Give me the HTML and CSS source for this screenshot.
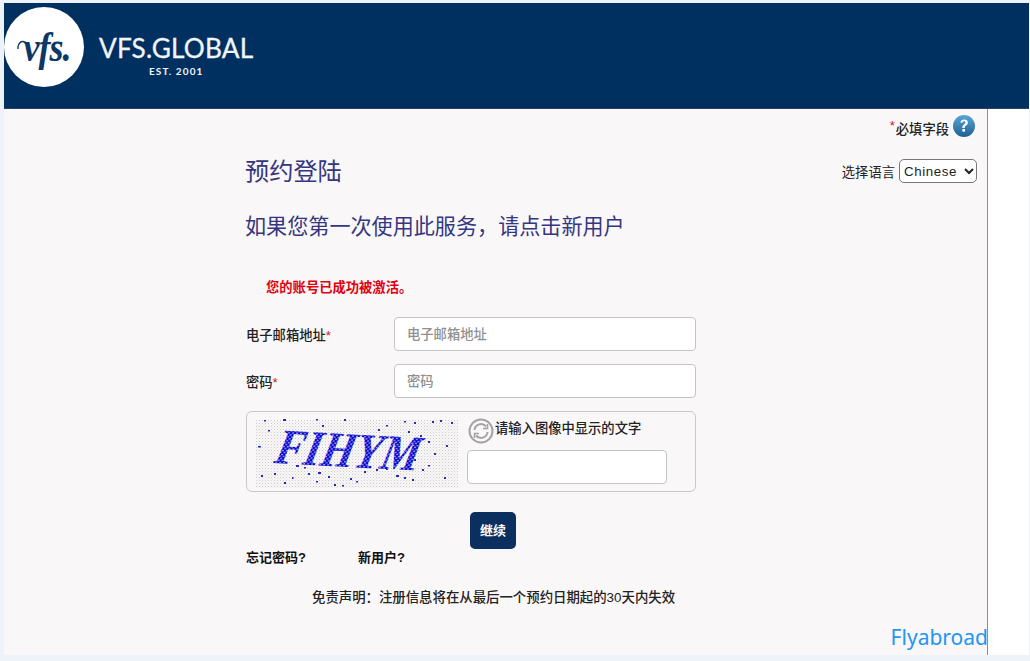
FILE: index.html
```html
<!DOCTYPE html>
<html lang="zh-CN">
<head>
<meta charset="utf-8">
<title>预约登陆</title>
<link rel="stylesheet" href="styles.css">
</head>
<body>
<div class="page">
  <header class="header">
    <div class="logo">
      <div class="logo-circle">
        <span class="logo-mark">vfs.</span>
        <svg class="logo-swash" width="14" height="12" viewBox="0 0 14 12" fill="none" stroke="#0c3766" stroke-width="1.400"><path d="M1 10c-.5-4 2-8 5-7.500 2 .3 3 2 6 1.500"/></svg>
      </div>
      <div class="logo-words">
        <span class="logo-name">VFS.GLOBAL</span>
        <span class="logo-est">EST. 2001</span>
      </div>
    </div>
  </header>
  <div class="body-row">
    <main class="panel">
      <div class="required-row">
        <span class="star star-top">*</span><span class="required-text">必填字段</span>
        <svg class="help" width="24" height="24" viewBox="0 0 24 24">
          <defs><linearGradient id="helpg" x1="0" y1="0" x2="0" y2="1"><stop offset="0" stop-color="#5aa6d6"/><stop offset="1" stop-color="#1d5f92"/></linearGradient></defs>
          <circle cx="12" cy="12" r="11" fill="url(#helpg)"/>
          <path d="M8.400 8.600c.3-2 1.800-3.100 3.800-3.100 2.200 0 3.700 1.300 3.700 3.100 0 1.400-.8 2.200-1.900 3-1 .7-1.300 1.200-1.300 2.300h-2.400c0-1.700.5-2.600 1.700-3.500.9-.7 1.400-1.100 1.400-1.800 0-.8-.6-1.300-1.400-1.300-.9 0-1.400.6-1.500 1.500z" fill="#fff"/>
          <rect x="10.400" y="15" width="2.600" height="2.600" fill="#fff"/>
        </svg>
      </div>
      <div class="title-row">
        <h1 class="title">预约登陆</h1>
        <div class="lang">
          <label class="lang-label" for="lang">选择语言</label>
          <div class="lang-box">
            <select class="lang-select" id="lang"><option>Chinese</option></select>
            <svg class="lang-arrow" width="10" height="7" viewBox="0 0 10 7" fill="none" stroke="#222" stroke-width="2"><path d="M1 1l4 4 4-4"/></svg>
          </div>
        </div>
      </div>
      <h2 class="subtitle">如果您第一次使用此服务，请点击新用户</h2>
      <p class="success">您的账号已成功被激活。</p>
      <div class="field">
        <label class="field-label">电子邮箱地址<span class="star">*</span></label>
        <input class="input" type="text" placeholder="电子邮箱地址">
      </div>
      <div class="field">
        <label class="field-label">密码<span class="star">*</span></label>
        <input class="input" type="text" placeholder="密码">
      </div>
      <div class="captcha">
        <svg class="captcha-img" width="202" height="72" viewBox="0 0 202 72">
          <defs>
            <pattern id="fine" width="3" height="3" patternUnits="userSpaceOnUse"><rect x="0" y="0" width="1" height="1" fill="#c9c9d4"/><rect x="1.500" y="1.500" width="1" height="1" fill="#dedfd0"/></pattern>
            <pattern id="weave" width="4" height="4" patternUnits="userSpaceOnUse"><rect width="4" height="4" fill="#0404cc"/><circle cx="1" cy="1" r=".75" fill="#e4e5ff"/><circle cx="3" cy="3" r=".75" fill="#e4e5ff"/></pattern>
          </defs>
          <rect x="0" y="3" width="202" height="68" fill="url(#fine)"/>
          <g class="noise">
            <rect x="8" y="3" width="2" height="1.500"/><rect x="27" y="2" width="3" height="2"/><rect x="66" y="8" width="2" height="2"/><rect x="88" y="2" width="2" height="2"/>
            <rect x="130" y="8" width="2" height="1.500"/><rect x="152" y="14" width="2" height="2"/><rect x="158" y="5" width="2" height="2"/><rect x="176" y="4" width="2" height="2"/><rect x="184" y="3" width="2" height="2"/><rect x="195" y="5" width="2" height="2"/>
            <rect x="122" y="12" width="2" height="2"/><rect x="148" y="4" width="2" height="1.500"/><rect x="172" y="24" width="2" height="2"/><rect x="178" y="36" width="2" height="2"/><rect x="190" y="28" width="2" height="2"/>
            <rect x="2" y="29" width="3" height="1.500"/><rect x="12" y="13" width="2" height="1.500"/><rect x="18" y="56" width="2" height="2"/><rect x="5" y="58" width="2" height="2"/><rect x="28" y="65" width="2" height="2"/>
            <rect x="40" y="48" width="3" height="2"/><rect x="48" y="50" width="2" height="1.500"/><rect x="52" y="56" width="2" height="2"/><rect x="62" y="55" width="3" height="2"/><rect x="72" y="59" width="2" height="2"/>
            <rect x="78" y="67" width="2" height="2"/><rect x="86" y="68" width="2" height="1.500"/><rect x="94" y="61" width="2" height="2"/><rect x="108" y="54" width="2" height="2"/><rect x="120" y="52" width="2" height="2"/>
            <rect x="130" y="51" width="2" height="2"/><rect x="140" y="58" width="3" height="2"/><rect x="148" y="60" width="2" height="2"/><rect x="156" y="62" width="2" height="2"/><rect x="166" y="52" width="2" height="2"/>
            <rect x="172" y="48" width="2" height="1.500"/><rect x="188" y="60" width="2" height="2"/><rect x="100" y="64" width="2" height="1.500"/><rect x="60" y="64" width="2" height="1.500"/><rect x="36" y="60" width="1.500" height="2"/>
            <rect x="158" y="42" width="2" height="2"/><rect x="164" y="18" width="2" height="2"/><rect x="60" y="2" width="2" height="1.500"/>
          </g>
          <text class="captcha-text" transform="translate(17 46) rotate(3) skewX(-10)" textLength="144" lengthAdjust="spacingAndGlyphs" fill="url(#weave)">FIHYM</text>
        </svg>
        <div class="captcha-side">
          <div class="captcha-prompt">
            <svg class="refresh" width="26" height="26" viewBox="0 0 26 26" fill="none" stroke="#a3a3a3">
              <circle cx="13" cy="13" r="11.500" stroke-width="2"/>
              <path d="M6.500 12a6.500 6.500 0 0 1 11.500-3.500M19.500 14a6.500 6.500 0 0 1-11.500 3.500" stroke-width="2"/>
              <path d="M19.500 6v4.500h-4.500M6.500 20v-4.500h4.500" stroke-width="1.500"/>
            </svg>
            <span class="captcha-label">请输入图像中显示的文字</span>
          </div>
          <input class="input captcha-input" type="text">
        </div>
      </div>
      <div class="submit-row"><button class="submit" type="button">继续</button></div>
      <div class="links">
        <a class="link link-forgot">忘记密码?</a>
        <a class="link">新用户?</a>
      </div>
      <p class="disclaimer">免责声明：注册信息将在从最后一个预约日期起的30天内失效</p>
      <div class="brand">Flyabroad</div>
    </main>
    <div class="gutter"></div>
  </div>
</div>
</body>
</html>
```
FILE: styles.css
```css
* { box-sizing: border-box; }
html, body { margin: 0; height: 100%; }
body {
  background: #eef3f9;
  font-family: "Liberation Sans", "Noto Sans CJK SC", sans-serif;
  color: #222;
  overflow: hidden;
}
.page { padding: 3px 1px 0 4px; width: 1030px; height: 655px; display: flex; flex-direction: column; }
.header { height: 106px; background: #003060; flex: none; border-bottom: 1px solid #2a4160; }
.logo { display: flex; align-items: flex-start; height: 100%; padding-top: 4px; }
.logo-circle {
  width: 80px; height: 80px; border-radius: 50%; background: #fff;
  display: flex; align-items: center; justify-content: center; flex: none; position: relative;
}
.logo-mark {
  font-family: "Liberation Serif", serif; font-style: italic; font-weight: 700; font-size: 36px;
  color: #0c3766; letter-spacing: -1px; transform: scaleY(1.2); padding-left: 6px;
}
.logo-swash { position: absolute; left: 13px; top: 32px; }
.logo-words { display: flex; flex-direction: column; align-items: center; margin-left: 15px; padding-top: 26px; color: #f2f5f8; }
.logo-name { font-family: Lato, sans-serif; font-size: 26.200px; line-height: 30px; letter-spacing: .2px; -webkit-text-stroke: .3px #f2f5f8; }
.logo-est { font-family: Lato, sans-serif; font-size: 10px; font-weight: 700; letter-spacing: 1.100px; line-height: 14px; margin-top: 1px; }
.body-row { flex: 1; display: flex; min-height: 0; }
.panel { width: 984px; background: #f9f7f8; border-right: 1px solid #8f8f8f; padding-left: 242px; position: relative; }
.gutter { flex: 1; background: #fff; }
.required-row {
  display: flex; align-items: center; justify-content: flex-end; height: 36px;
  padding-right: 11px; font-size: 13.300px; font-weight: 500; margin-left: -242px;
}
.required-text { padding-top: 2px; }
.star { color: #d0142c; font-weight: 400; }
.star-top { align-self: flex-start; margin: 10px 1px 0 0; line-height: 1; }
.help { margin-left: 3px; margin-top: -3px; }
.title-row { display: flex; align-items: center; justify-content: space-between; height: 40px; margin-top: 7px; padding-right: 10px; margin-left: -1px; }
.title { margin: 0; font-size: 24.200px; font-weight: 400; color: #353680; line-height: 40px; }
.lang { display: flex; align-items: center; gap: 4px; font-size: 13.300px; margin-top: -2px; }
.lang-box { position: relative; width: 78px; height: 24px; }
.lang-select {
  appearance: none; -webkit-appearance: none; width: 78px; height: 24px; font-family: "Liberation Sans", sans-serif; font-size: 13.300px; letter-spacing: .6px;
  border: 1px solid #777; border-radius: 5px; background: #fff; color: #222; padding: 0 0 0 4px;
}
.lang-arrow { position: absolute; right: 3px; top: 9px; pointer-events: none; }
.subtitle { margin: 19px 0 0 -1px; font-size: 21.100px; font-weight: 400; color: #353680; line-height: 32px; }
.success { margin: 35px 0 0 20px; font-size: 13.300px; font-weight: 700; color: #e2000f; line-height: 20px; }
.field { display: flex; align-items: center; margin-top: 13px; height: 34px; }
.success + .field { margin-top: 19px; }
.field-label { width: 148px; font-size: 13.300px; font-weight: 500; color: #222; flex: none; }
.input {
  width: 302px; height: 34px; border: 1px solid #c4c4c4; border-radius: 4px; background: #fff;
  font-family: "Liberation Sans", "Noto Sans CJK SC", sans-serif; font-size: 13.300px; padding: 0 12px; outline: none;
}
.input::placeholder { color: #8f8f8f; font-weight: 500; opacity: 1; }
.captcha {
  display: flex; width: 450px; height: 81px; margin-top: 13px; border: 1px solid #c8c8c8; border-radius: 6px;
  padding: 5px 0 0 9px;
}
.captcha-img { flex: none; }
.noise rect { fill: #2a2ab8; }
.captcha-text { font-family: "Liberation Serif", serif; font-style: italic; font-weight: 700; font-size: 50px; }
.captcha-side { margin-left: 9px; display: flex; flex-direction: column; }
.captcha-prompt { display: flex; align-items: flex-start; height: 33px; padding-left: 1px; }
.refresh { flex: none; margin-top: 1px; }
.captcha-label { font-size: 13.300px; font-weight: 500; line-height: 20px; margin: 2px 0 0 1px; }
.captcha-input { width: 200px; margin-top: 0; }
.submit-row { width: 450px; display: flex; justify-content: center; margin-top: 20px; padding-left: 44px; }
.submit {
  width: 46px; height: 37px; background: #0b2f5e; color: #fff; border: 0; border-radius: 5px;
  font-family: "Liberation Sans", "Noto Sans CJK SC", sans-serif; font-size: 13px; font-weight: 700; padding: 0 0 2px;
}
.links { display: flex; height: 14px; align-items: center; font-size: 13px; font-weight: 700; color: #111; }
.link-forgot { width: 112px; }
.disclaimer { margin: 26px 0 0 66px; font-size: 13.400px; font-weight: 500; line-height: 18px; }
.brand {
  position: absolute; right: -1px; bottom: 4px; font-family: "Noto Sans", sans-serif; font-size: 21px;
  line-height: 28px; color: #2196f3; letter-spacing: 0;
}
```
